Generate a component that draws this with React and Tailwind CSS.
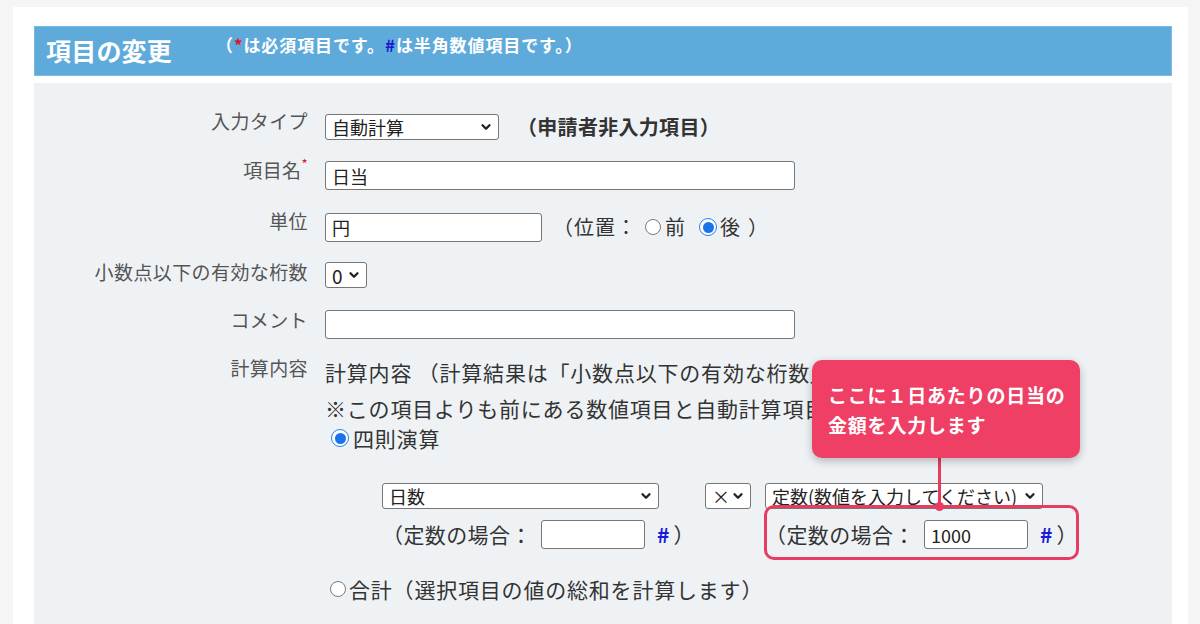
import { ChevronDown } from "lucide-react";

// fake native controls
const Select = ({ className, children }) => (
  <div
    className={`flex h-[26px] shrink-0 items-center justify-between rounded-[3px] border border-[#767676] bg-white pl-[6px] pr-[5px] text-[18px] leading-none text-[#222] ${className}`}
  >
    <span className="whitespace-nowrap">{children}</span>
    <ChevronDown size={14} strokeWidth={4} className="shrink-0 text-[#222]" />
  </div>
);

const Input = ({ className, value }) => (
  <div
    className={`flex h-[29px] shrink-0 items-center rounded-[3px] border border-[#767676] bg-white pl-[6px] text-[18px] leading-none text-[#222] ${className}`}
  >
    {value}
  </div>
);

const Radio = ({ checked, className = "mx-[2px]" }) =>
  checked ? (
    <span className={`inline-flex h-[18px] w-[18px] shrink-0 items-center justify-center rounded-full border-[1.5px] border-[#2a7ef2] bg-white ${className}`}>
      <span className="h-[11px] w-[11px] rounded-full bg-[#1a73e8]" />
    </span>
  ) : (
    <span className={`inline-block h-[16px] w-[16px] shrink-0 rounded-full border-[1.5px] border-[#7a7a7a] bg-white ${className}`} />
  );

const Label = ({ children, className = "" }) => (
  <div
    className={`w-[274px] shrink-0 text-right text-[19px] leading-[26px] tracking-[0.4px] text-[#555] ${className}`}
  >
    {children}
  </div>
);

const ConstRow = ({ value }) => (
  <div className="flex h-[29px] items-center text-[21px] text-[#333]">
    <span className="w-[150px] whitespace-nowrap tracking-[0.4px]">（定数の場合：</span>
    <Input className="ml-[9px] w-[104px]" value={value} />
    <span className="ml-[12px] font-bold text-[#1b1bd6]">#</span>
    <span className="ml-[4px]">）</span>
  </div>
);

const App = () => {
  return (
    <div className="h-[624px] w-[1200px] overflow-hidden bg-[#f5f5f5] font-['Noto_Sans_CJK_JP',sans-serif]">
      <div className="ml-[13px] mt-[7px] flex h-[700px] w-[1175px] flex-col bg-white pl-[21px] pr-[16px] pt-[19px]">
        {/* header */}
        <div className="flex h-[50px] items-start border border-[#78bbe6] bg-[#5eaadb] pl-[11px] pt-[7px] text-white">
          <h2 className="text-[25px] font-bold leading-[32px] tracking-[0.2px]">項目の変更</h2>
          <p className="ml-[44px] text-[17px] font-bold leading-[22px] tracking-[0.9px]">
            （<span className="text-[#e0102a]">*</span>は必須項目です。
            <span className="text-[#1a1ad0]">#</span>は半角数値項目です。）
          </p>
        </div>

        {/* form */}
        <div className="mt-[7px] flex-1 bg-[#eef2f5] pt-[29px]">
          <div className="flex h-[49px] items-start">
            <Label className="-mt-[4px]">入力タイプ</Label>
            <div className="ml-[17px] flex items-center">
              <Select className="w-[174px]">自動計算</Select>
              <span className="ml-[18px] text-[20px] font-bold tracking-[0.3px] text-[#333]">（申請者非入力項目）</span>
            </div>
          </div>

          <div className="flex h-[51px] items-start">
            <Label className="-mt-[4px]">
              項目名<span className="align-top text-[13px] leading-none text-[#e0102a]">*</span>
            </Label>
            <div className="ml-[17px]">
              <Input className="w-[470px]" value="日当" />
            </div>
          </div>

          <div className="flex h-[50px] items-start">
            <Label className="-mt-[4px]">単位</Label>
            <div className="ml-[17px] flex items-center text-[20px] text-[#333]">
              <Input className="w-[217px]" value="円" />
              <span className="ml-[11px] tracking-[1px]">（位置：</span>
              <Radio className="ml-[8px] mr-[4px]" />
              <span>前</span>
              <Radio checked className="ml-[14px] mr-[3px]" />
              <span>後</span>
              <span className="ml-[8px]">）</span>
            </div>
          </div>

          <div className="flex h-[48px] items-start">
            <Label className="-mt-[3px]">小数点以下の有効な桁数</Label>
            <div className="ml-[17px]">
              <Select className="w-[42px] text-[19px]">0</Select>
            </div>
          </div>

          <div className="flex h-[44px] items-start">
            <Label className="-mt-[3px]">コメント</Label>
            <div className="ml-[17px]">
              <Input className="w-[470px]" value="" />
            </div>
          </div>

          <div className="flex items-start">
            <Label className="mt-[1px]">計算内容</Label>
            <div className="ml-[17px] text-[21px] tracking-[0.8px] text-[#333]">
              <p className="whitespace-nowrap leading-[36px]">
                計算内容 （計算結果は「小数点以下の有効な桁数」で四捨五入されます）
              </p>
              <p className="whitespace-nowrap leading-[36px]">
                ※この項目よりも前にある数値項目と自動計算項目が選択できます
              </p>
              <div className="-mt-[2px] flex items-center leading-[28px]">
                <Radio checked className="ml-[6px] mr-[4px]" />
                <span>四則演算</span>
              </div>

              <div className="ml-[57px] mt-[31px] flex items-start tracking-normal">
                <div className="w-[323px]">
                  <Select className="w-[277px]">日数</Select>
                  <div className="mt-[11px]">
                    <ConstRow value="" />
                  </div>
                </div>
                <div className="w-[60px]">
                  <Select className="w-[46px]">×</Select>
                </div>
                <div className="relative">
                  <Select className="w-[278px]">定数(数値を入力してください)</Select>
                  <div className="mt-[11px]">
                    <ConstRow value="1000" />
                  </div>

                  {/* highlight + callout */}
                  <div className="absolute left-[-1px] top-[22px] h-[55px] w-[315px] rounded-[10px] border-[3px] border-[#e73b60]" />
                  <div className="absolute left-[173px] top-[-25px] h-[48px] w-[3px] bg-[#e73b60]" />
                  <div className="absolute left-[170px] top-[19px] h-[9px] w-[9px] rounded-full bg-[#e73b60]" />
                  <div className="absolute left-[47px] top-[-123px] h-[98px] w-[268px] rounded-[10px] bg-[#ef3f64] pl-[16px] pt-[20px] text-[19px] font-bold leading-[30px] tracking-[0.8px] text-white shadow-[0_3px_8px_rgba(0,0,0,0.25)]">
                    <p className="whitespace-nowrap">ここに１日あたりの日当の</p>
                    <p className="whitespace-nowrap">金額を入力します</p>
                  </div>
                </div>
              </div>

              <div className="mt-[26px] flex items-center leading-[28px]">
                <Radio className="ml-[5px] mr-[3px]" />
                <span>合計（選択項目の値の総和を計算します）</span>
              </div>
            </div>
          </div>
        </div>
      </div>
    </div>
  );
};

export default App;
